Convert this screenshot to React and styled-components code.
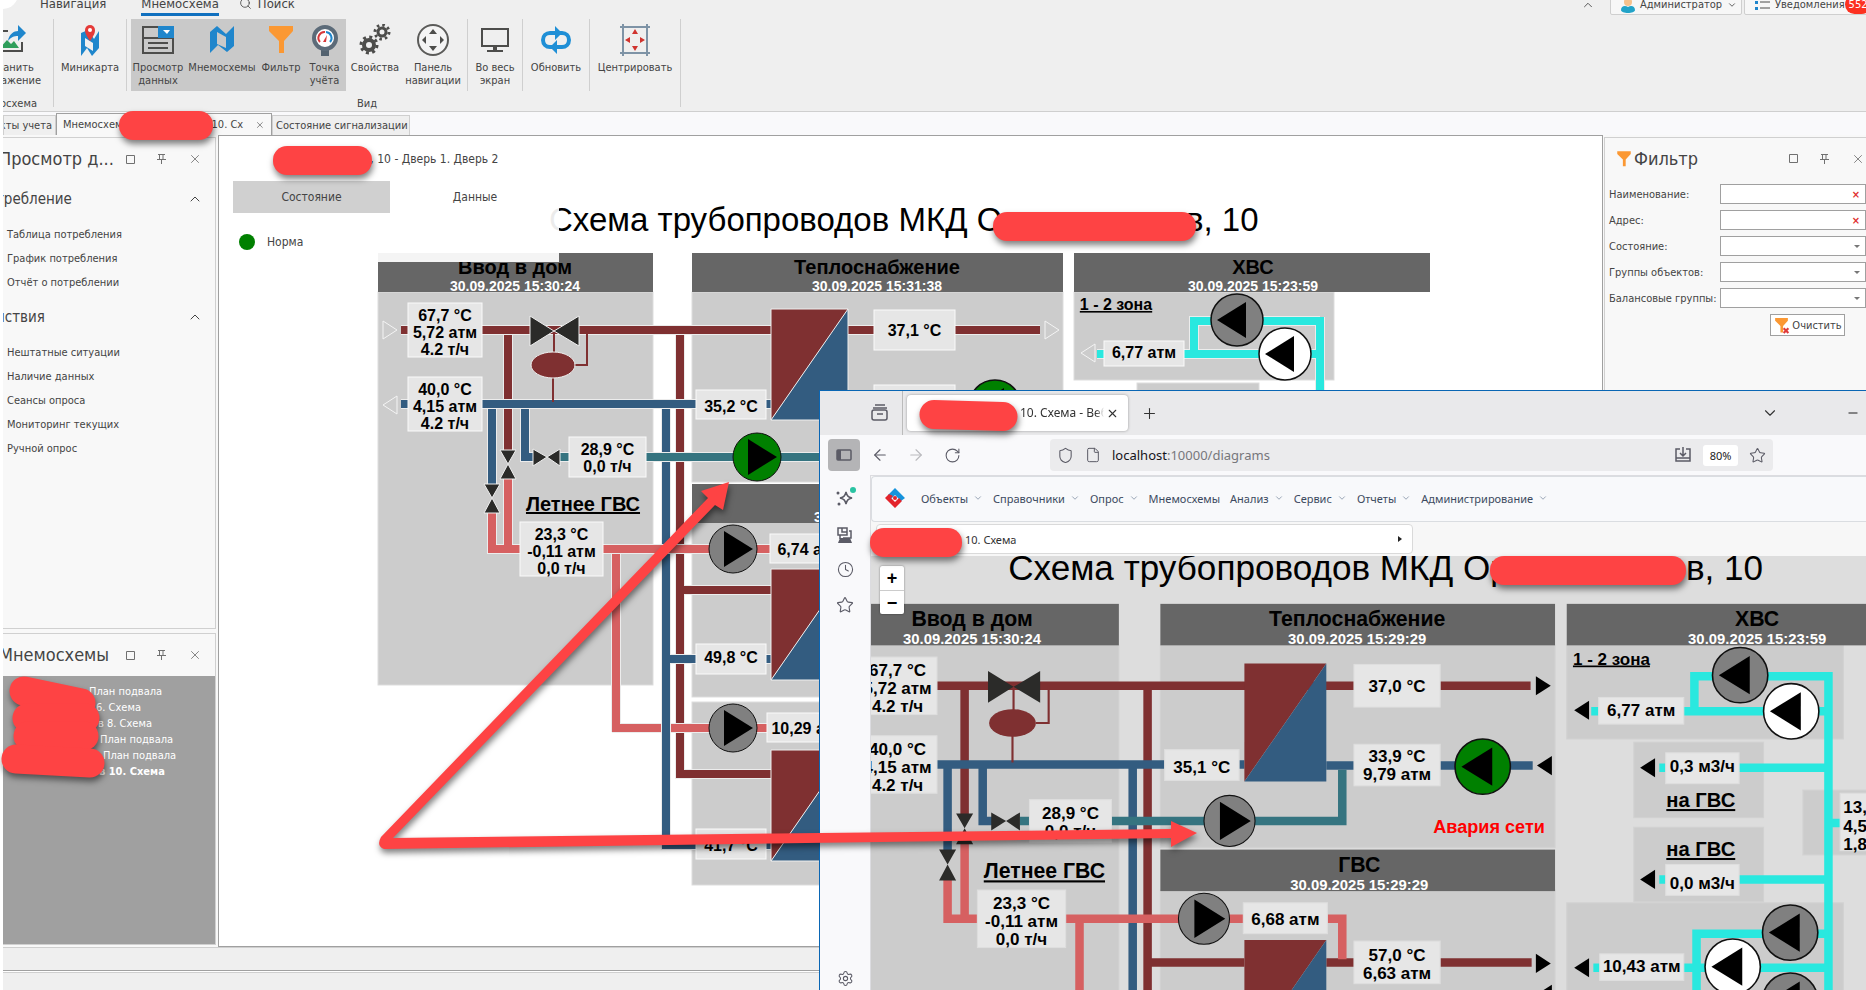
import React from "react";
import styled, { createGlobalStyle, css } from "styled-components";
import {
    ArrowLeft, ArrowRight, ChevronDown, ChevronUp, Clock, File, Minus, Plus,
    RotateCw, Search, Settings, Shield, Star, X,
} from "lucide-react";

const RED = "#7f3031";
const BLUE = "#335c80";
const TEAL = "#357480";
const PINK = "#d66061";
const CYAN = "#29e8df";

// Ribbon icons
const SaveImageIcon = () => (
    <svg width="40" height="32" viewBox="0 0 40 32" fill="none">
        <path d="M22 7H8v20h28v-9" stroke="#4d4d4b" strokeWidth="2" />
        <path d="M14 24l7-8 4 4 3-3 5 7z" fill="#2f9e5b" />
        <path d="M22 17c1-7 6-10 10-10V1l8 8-8 8v-5c-4 0-7 1-10 5z" fill="#1f86cc" />
    </svg>
);
const MinimapIcon = () => (
    <svg width="32" height="32" viewBox="0 0 32 32">
        <path d="M7 9l7-3 6 9 5-8v17l-7 8-5-8-6 8z" fill="#1f86cc" />
        <path d="M11 14v8l8 5v-8z" fill="#efefef" />
        <path d="M16 17c-4-6-5-8-5-11a5 5 0 0 1 10 0c0 3-1 5-5 11z" fill="#e53a38" />
        <circle cx="16" cy="6" r="2" fill="#fff" />
    </svg>
);
const ViewDataIcon = () => (
    <svg width="32" height="32" viewBox="0 0 32 32" fill="none">
        <path d="M1 3h30v26H1z" stroke="#4d4d4b" strokeWidth="2" />
        <path d="M1 14h30M6 19h20M6 24h20" stroke="#4d4d4b" strokeWidth="2" />
        <path d="M16 2h16v12H16z" fill="#1f86cc" />
        <path d="M21 6h7l-3 4z" fill="#fff" />
    </svg>
);
const SchemesIcon = () => (
    <svg width="32" height="32" viewBox="0 0 32 32">
        <path d="M4 8l7-6 9 8 8-8v20l-7 6-9-7-8 8z" fill="#1f86cc" />
        <path d="M11 8v12l9 4V13z" fill="#c9c9c9" />
    </svg>
);
const FunnelIcon = ({ size = 32, crossed }) => (
    <svg width={size} height={size} viewBox="0 0 32 32">
        <path d="M4 2h24v5l-9 10v12h-5V17L4 7z" fill="#fb9833" />
        {crossed && <path d="M20 21l9 9m0-9l-9 9" stroke="#df3b3b" strokeWidth="4" />}
    </svg>
);
const MeterIcon = () => (
    <svg width="32" height="32" viewBox="0 0 32 32" fill="none">
        <path d="M12 24h8v8h-8z" fill="#53626f" />
        <circle cx="16" cy="14" r="11" fill="#fff" stroke="#5c6b79" strokeWidth="4" />
        <path d="M11 18a6 6 0 0 1 5-10" stroke="#d8393b" strokeWidth="2" />
        <path d="M17 8a6 6 0 0 1 4 10" stroke="#1f86cc" strokeWidth="2" />
        <path d="M14 18l4-7-1 7z" fill="#d8393b" />
    </svg>
);
const GearsIcon = () => (
    <svg width="32" height="32" viewBox="0 0 32 32" fill="none" stroke="#4d4d4b">
        <circle cx="10" cy="21" r="5" strokeWidth="4" />
        <circle cx="10" cy="21" r="8" strokeWidth="3" strokeDasharray="3 3.28" />
        <circle cx="23" cy="8" r="4" strokeWidth="3" />
        <circle cx="23" cy="8" r="7" strokeWidth="3" strokeDasharray="2.5 3" />
    </svg>
);
const NavPanelIcon = () => (
    <svg width="32" height="32" viewBox="0 0 32 32" fill="#4d4d4b">
        <circle cx="16" cy="16" r="15" fill="#f4f4f4" stroke="#5b5b59" strokeWidth="2" />
        <path d="M16 5l4 5h-8zM16 27l4-5h-8zM5 16l4-4v8zM27 16l-4-4v8z" />
    </svg>
);
const ScreenIcon = () => (
    <svg width="32" height="32" viewBox="0 0 32 32">
        <path d="M3 5h26v17H3z" fill="none" stroke="#4d4d4b" strokeWidth="2" />
        <path d="M14 22h4v4h6v2H8v-2h6z" fill="#4d4d4b" />
    </svg>
);
const RefreshIcon = () => (
    <svg width="34" height="32" viewBox="0 0 34 32" fill="none" stroke="#1f8fd6" strokeWidth="4">
        <path d="M13 23h-2c-4 0-7-3-7-7s3-7 7-7h6" />
        <path d="M21 9h2c4 0 7 3 7 7s-3 7-7 7h-6" />
        <path d="M16 2v14l7-7zM18 30V16l-7 7z" fill="#1f8fd6" stroke="none" />
    </svg>
);
const CenterIcon = () => (
    <svg width="32" height="32" viewBox="0 0 32 32" fill="none">
        <path d="M1 3h30M1 29h30M4 0v32M28 0v32" stroke="#7e93a6" strokeWidth="2" />
        <path d="M16 5l3 5h-6zM16 27l3-5h-6zM6 16l5-3v6zM26 16l-5-3v6z" fill="#d0342f" />
    </svg>
);
const UserIcon = () => (
    <svg width="14" height="16" viewBox="0 0 14 16">
        <circle cx="7" cy="5" r="4" fill="#f5c28d" />
        <path d="M0 13c0-4 4-5 7-3 3-2 7-1 7 3 0 4-14 4-14 0z" fill="#22a3c8" />
    </svg>
);
const ListIcon = () => (
    <svg width="15" height="12" viewBox="0 0 15 12">
        <path d="M5 3h10M5 9h10" stroke="#4d4d4b" strokeWidth="1" />
        <path d="M0 2h3v3H0zM0 8h3v3H0z" fill="#1f86cc" />
    </svg>
);
const PinIcon = () => (
    <svg width="9" height="10" viewBox="0 0 9 10" fill="none" stroke="#707070">
        <path d="M1 .5h7M2.5 .5v5M6 .5v5M0 5.5h9M4.5 5.5V10" />
    </svg>
);
const SquareIcon = () => (
    <svg width="9" height="9" viewBox="0 0 9 9" fill="none" stroke="#707070">
        <path d="M.5 .5h8v8h-8z" />
    </svg>
);
const CaretIcon = () => (
    <svg width="6" height="3" viewBox="0 0 6 3"><path d="M0 0h6L3 3z" fill="#777" /></svg>
);

// Browser icons
const ArchiveIcon = () => (
    <svg width="18" height="18" viewBox="0 0 18 18" fill="none" stroke="#5b5b66" strokeWidth="1.5">
        <path d="M4 1h10M2 4h14" />
        <rect x="1" y="6" width="15" height="10" rx="2" />
        <path d="M6 10h6" />
    </svg>
);
const SidebarIcon = () => (
    <svg width="16" height="12" viewBox="0 0 16 12">
        <rect x="1" y="1" width="14" height="10" rx="1" fill="none" stroke="#5b5b66" strokeWidth="1.5" />
        <path d="M1 1h4v10H1z" fill="#5b5b66" />
    </svg>
);
const SparkIcon = () => (
    <svg width="22" height="22" viewBox="0 0 22 22" fill="none" stroke="#5b5b66" strokeWidth="1.5">
        <path d="M12 5c1 4 2 5 6 6-4 1-5 2-6 6-1-4-2-5-6-6 4-1 5-2 6-6z" />
        <circle cx="4" cy="6" r="1.5" fill="#5b5b66" stroke="none" />
        <circle cx="5" cy="17" r="1.5" fill="#5b5b66" stroke="none" />
        <circle cx="19" cy="3" r="3" fill="#2ac3a2" stroke="none" />
    </svg>
);
const DevicesIcon = () => (
    <svg width="16" height="16" viewBox="0 0 16 16" fill="none" stroke="#5b5b66" strokeWidth="1.5">
        <path d="M1 1h9v7H1zM5 1v4h5M3 8v4M12 4h2v7H6" />
        <path d="M3 11h10l2 5H1z" fill="#5b5b66" stroke="none" />
    </svg>
);
const InstallIcon = () => (
    <svg width="18" height="16" viewBox="0 0 18 16" fill="none" stroke="#5b5b66" strokeWidth="1.5">
        <path d="M6 2H2v12h14V2h-4M2 11h14M9 0v8M6 6l3 3 3-3" />
    </svg>
);
const LogoIcon = () => (
    <svg width="20" height="20" viewBox="0 0 20 20">
        <path d="M10 0l10 10-4 3-6-6-4 4-3-4z" fill="#1593dc" />
        <path d="M4 6L0 10l10 10 7-7-3-3-4 4-4-4 2-2z" fill="#e3242b" />
        <circle cx="10" cy="10" r="2" fill="#e3242b" />
    </svg>
);

// Mnemonic scheme
const PANELS = [
    [378, 292, 275, 393], [692, 292, 371, 190], [692, 522, 371, 175], [692, 702, 371, 183],
    [1074, 292, 260, 88], [1137, 383, 122, 71], [1137, 463, 122, 70], [1074, 534, 260, 100],
    [1296, 428, 200, 61],
];
const PIPES = [
    [RED, "M680 330V774H771M680 590H771M508 330V455"],
    [PINK, "M612 728H767M616 549V732"],
    [BLUE, "M666 404V845H771M666 659H771M492 404V490M525 404V457H536M848 405H1042"],
    [RED, "M401 330H1040M848 590H1041"],
    [BLUE, "M401 404H771"],
    [TEAL, "M560 457H863V409"],
    [PINK, "M508 475V549M492 510V549H849M488 549H500M849 549H863V587"],
    [CYAN, "M1097 354H1320M1194 354V321H1320M1320 317V640M1161 407H1320M1161 512H1320M1320 459H1331"],
    [CYAN, "M1196 640V563H1320M1099 595H1320M946 620H1041"],
];
const EXCHANGERS = [309, 569, 750];
const VALVES = [
    "M530 316V346L554 331 579 346V316L554 331z",
    "M533 449V466L547 457 560 466V449L547 457z",
    "M500 450H516L508 464 516 479H500L508 464z",
    "M484 484H500L492 498 500 513H484L492 498z",
];
const ARROWS = [
    [383, 330, 1], [397, 405, -1], [1045, 330, 1], [1060, 405, -1], [1045, 591, 1], [1060, 620, -1],
    [1095, 353, -1], [1157, 407, -1], [1157, 512, -1], [1095, 595, -1],
];
const VALUES = [
    { x: 408, y: 303, w: 74, h: 54, base: 321, lines: ["67,7 °C", "5,72 атм", "4.2 т/ч"] },
    { x: 408, y: 377, w: 74, h: 54, base: 395, lines: ["40,0 °C", "4,15 атм", "4.2 т/ч"] },
    { x: 569, y: 437, w: 77, h: 40, base: 455, lines: ["28,9 °C", "0,0 т/ч"] },
    { x: 520, y: 522, w: 83, h: 54, base: 540, lines: ["23,3 °C", "-0,11 атм", "0,0 т/ч"] },
    { x: 696, y: 390, w: 70, h: 29, base: 412, id: "back" },
    { x: 874, y: 310, w: 81, h: 40, base: 336, id: "out" },
    { x: 874, y: 385, w: 81, h: 39, base: 402, lines: ["33,9 °C", "9,79 атм"] },
    { x: 770, y: 534, w: 79, h: 29, base: 555, id: "pressure" },
    { x: 874, y: 570, w: 81, h: 40, base: 589, lines: ["57,0 °C", "6,63 атм"] },
    { x: 767, y: 713, w: 82, h: 29, base: 734, lines: ["10,29 атм"] },
    { x: 696, y: 644, w: 70, h: 30, base: 663, lines: ["49,8 °C"] },
    { x: 696, y: 829, w: 70, h: 30, base: 851, lines: ["41,7 °C"] },
    { x: 1104, y: 341, w: 80, h: 25, base: 358, lines: ["6,77 атм"] },
    { x: 1167, y: 393, w: 69, h: 29, base: 411, lines: ["0,3 м3/ч"] },
    { x: 1167, y: 498, w: 69, h: 29, base: 521, lines: ["0,0 м3/ч"] },
    { x: 1105, y: 582, w: 79, h: 25, base: 599, lines: ["10,43 атм"] },
    { x: 1331, y: 431, w: 80, h: 54, tx: 1345, base: 450, lines: ["13,", "4,5", "1,8"] },
];

const Pump = ({ x, y, r = 24, fill = "#808080", left }) => {
    const d = left ? -1 : 1;
    return (
        <g>
            <circle cx={x} cy={y} r={r} fill={fill} stroke="#111" strokeWidth={r > 24 ? 1.5 : 1} />
            <path d={`M${x - 9 * d} ${y - 18}V${y + 18}L${x + 20 * d} ${y}z`} fill="#000" />
        </g>
    );
};

const Value = ({ x, y, w, h, tx, base, lines, outlined }) => (
    <g>
        <rect x={x} y={y} width={w} height={h} fill="#e6e6e6" stroke={outlined ? "#fafafa" : "#dedede"} />
        {lines.map((line, i) => (
            <ValueText key={line} x={tx || x + w / 2} y={base + i * 17}>{line}</ValueText>
        ))}
    </g>
);

const Heading = ({ x, y, w, tx, title, date }) => (
    <g>
        <rect x={x} y={y} width={w} height="39" fill="#666" />
        <HeadingText x={tx} y={y + 21}>{title}</HeadingText>
        <DateText x={tx} y={y + 38}>{date}</DateText>
    </g>
);

const Scheme = ({ view, width, height, data, outlined }) => (
    <SchemeSvg viewBox={view} width={width} height={height} preserveAspectRatio="xMinYMin">
        <TitleText x="549" y="231">Схема трубопроводов МКД Ор</TitleText>
        <TitleText x="1186" y="231">в, 10</TitleText>
        {PANELS.map(([x, y, w, h]) => (
            <rect key={`${x}-${y}`} x={x} y={y} width={w} height={h} fill="#ccc" stroke={outlined ? "#ddd" : "#d2d2d2"} />
        ))}
        <Heading x={378} y={253} w={275} tx={515} title="Ввод в дом" date="30.09.2025 15:30:24" />
        <Heading x={692} y={253} w={371} tx={877} title="Теплоснабжение" date={data.heatDate} />
        <Heading x={692} y={484} w={371} tx={879} title="ГВС" date={data.heatDate} />
        <Heading x={1074} y={253} w={356} tx={1253} title="ХВС" date="30.09.2025 15:23:59" />
        {PIPES.map(([color, d]) => (
            <g key={d} fill="none">
                {outlined && <path d={d} stroke="#ececec" strokeWidth="10" />}
                <path d={d} stroke={color} strokeWidth="8" />
            </g>
        ))}
        <path d="M554 331V353M575 365H587V330M553 377V402" fill="none" stroke={RED} strokeWidth="2" />
        <ellipse cx="553" cy="365" rx="22" ry="13" fill={RED} stroke={outlined ? "#eee" : "none"} />
        {VALVES.map((d) => (
            <path key={d} d={d} fill="#2b2b29" stroke={outlined ? "#eee" : "none"} />
        ))}
        {EXCHANGERS.map((y) => (
            <g key={y}>
                <path d={`M771 ${y}H848L771 ${y + 111}z`} fill={RED} />
                <path d={`M848 ${y}V${y + 111}H771z`} fill={BLUE} />
                {outlined && <path d={`M771 ${y}H848V${y + 111}H771zM848 ${y}L771 ${y + 111}`} fill="none" stroke="#eee" />}
            </g>
        ))}
        {ARROWS.map(([x, y, d]) => (
            <path
                key={`${x}-${y}`}
                d={`M${x} ${y - 9}V${y + 9}L${x + 14 * d} ${y}z`}
                fill={outlined ? "none" : "#000"}
                stroke={outlined ? "#f4f4f4" : "none"}
            />
        ))}
        <Pump x={757} y={457} fill={data.pump} />
        <Pump x={733} y={549} />
        <Pump x={733} y={728} />
        <Pump x={995} y={406} r={26} fill="#008000" left />
        <Pump x={1237} y={320} r={26} left />
        <Pump x={1285} y={354} r={26} fill="#fff" left />
        <Pump x={1284} y={562} r={26} left />
        <Pump x={1230} y={594} r={26} fill="#fff" left />
        <Pump x={1284} y={626} r={26} left />
        {VALUES.map((v) => (
            <Value key={v.x + "-" + v.y} {...v} outlined={outlined} lines={v.lines || data[v.id]} />
        ))}
        <LabelText x="583" y="511" $size={20}>Летнее ГВС</LabelText>
        <LabelText x="1200" y="444" $size={19}>на ГВС</LabelText>
        <LabelText x="1200" y="490" $size={19}>на ГВС</LabelText>
        <LabelText x="1116" y="310" $size={16}>1 - 2 зона</LabelText>
        {data.alarm && <AlarmText x="1001" y="468">{data.alarm}</AlarmText>}
    </SchemeSvg>
);

const desktopData = {
    heatDate: "30.09.2025 15:31:38", pump: "#008000", back: ["35,2 °C"], out: ["37,1 °C"], pressure: ["6,74 атм"],
};
const webData = {
    heatDate: "30.09.2025 15:29:29", pump: "#808080", back: ["35,1 °C"], out: ["37,0 °C"], pressure: ["6,68 атм"],
    alarm: "Авария сети",
};

const ribbonGroups = [
    [{ w: 72, icon: <MinimapIcon />, label: "Миникарта" }],
    [
        { w: 54, icon: <ViewDataIcon />, label: "Просмотр данных", on: true },
        { w: 74, icon: <SchemesIcon />, label: "Мнемосхемы", on: true },
        { w: 44, icon: <FunnelIcon />, label: "Фильтр", on: true },
        { w: 43, icon: <MeterIcon />, label: "Точка учёта", on: true },
        { w: 58, icon: <GearsIcon />, label: "Свойства" },
        { w: 58, icon: <NavPanelIcon />, label: "Панель навигации" },
    ],
    [{ w: 54, icon: <ScreenIcon />, label: "Во весь экран" }],
    [{ w: 66, icon: <RefreshIcon />, label: "Обновить" }],
    [{ w: 90, icon: <CenterIcon />, label: "Центрировать" }],
];

const menu = ["Объекты", "Справочники", "Опрос", "Мнемосхемы", "Анализ", "Сервис", "Отчеты", "Администрирование"];

const tree = [
    { indent: 86, text: "План подвала" },
    { indent: 93, text: "6. Схема" },
    { indent: 95, text: "в 8. Схема" },
    { indent: 97, text: "План подвала" },
    { indent: 100, text: "План подвала" },
    { indent: 96, text: "в 10. Схема", bold: true },
];

const PanelTools = () => (
    <Tools>
        <PlainButton aria-label="Развернуть"><SquareIcon /></PlainButton>
        <PlainButton aria-label="Закрепить"><PinIcon /></PlainButton>
        <PlainButton aria-label="Закрыть"><X size={14} strokeWidth={1.5} /></PlainButton>
    </Tools>
);

const NavSection = ({ title, items }) => (
    <Section>
        <SectionTitle><h3>{title}</h3><ChevronUp size={16} strokeWidth={1.5} /></SectionTitle>
        {items.map((item) => <NavLink href="#" key={item}>{item}</NavLink>)}
    </Section>
);

const Browser = () => (
    <Window>
        <TitleBar>
            <ArchiveSlot><ArchiveIcon /></ArchiveSlot>
            <BrowserTab>
                <span>10. Схема - Веб</span>
                <PlainButton aria-label="Закрыть вкладку"><X size={13} strokeWidth={2} /></PlainButton>
            </BrowserTab>
            <PlainButton aria-label="Новая вкладка"><Plus size={17} strokeWidth={1.5} /></PlainButton>
            <WindowTools>
                <ChevronDown size={18} strokeWidth={1.5} />
                <Minus size={14} color="#000" strokeWidth={1.5} />
            </WindowTools>
        </TitleBar>
        <NavBar>
            <SidebarButton aria-label="Боковая панель"><SidebarIcon /></SidebarButton>
            <NavButton aria-label="Назад"><ArrowLeft size={18} strokeWidth={1.5} /></NavButton>
            <NavButton aria-label="Вперёд" disabled><ArrowRight size={18} strokeWidth={1.5} /></NavButton>
            <NavButton aria-label="Обновить"><RotateCw size={17} strokeWidth={1.5} /></NavButton>
            <UrlBar>
                <Shield size={17} strokeWidth={1.5} />
                <File size={16} strokeWidth={1.5} />
                <Url><b>localhost</b>:10000/diagrams</Url>
                <InstallIcon />
                <Zoom>80%</Zoom>
                <Star size={17} strokeWidth={1.5} />
            </UrlBar>
        </NavBar>
        <BrowserBody>
            <SideStrip>
                <SparkIcon />
                <DevicesIcon />
                <Clock size={17} strokeWidth={1.5} />
                <Star size={18} strokeWidth={1.5} />
                <Settings size={17} strokeWidth={1.5} />
            </SideStrip>
            <Site>
                <SiteMenu>
                    <LogoIcon />
                    {menu.map((item) => (
                        <MenuLink href="#" key={item}>
                            {item}
                            {item !== "Мнемосхемы" && <ChevronDown size={10} color="#8795a8" />}
                        </MenuLink>
                    ))}
                </SiteMenu>
                <SitePath>
                    <PathButton><span>10. Схема</span><i /></PathButton>
                </SitePath>
                <WebCanvas>
                    <Scheme view="420 208 940 410" width="1000" height="500" data={webData} />
                    <ZoomControl>
                        <button aria-label="Приблизить">+</button>
                        <button aria-label="Отдалить">−</button>
                    </ZoomControl>
                </WebCanvas>
            </Site>
        </BrowserBody>
    </Window>
);

// Red marks drawn by hand over the windows
const Marks = () => (
    <MarksSvg>
        <circle cx="3" cy="-6" r="15" fill="#fff" />
        <g fill="#fe4344">
            <g>
                <rect x="119" y="111" width="94" height="29" rx="14" />
                <rect x="273" y="146" width="99" height="29" rx="14" />
                <rect x="993" y="212" width="203" height="29" rx="14" />
                <path d="M934 400l69 2a14 14 0 0 1 0 29l-69-2a14 14 0 0 1 0-29z" />
                <rect x="870" y="528" width="92" height="29" rx="14" />
                <rect x="1490" y="556" width="196" height="29" rx="14" />
            </g>
            <g stroke="#fe4344" strokeWidth="29" strokeLinecap="round">
                <path d="M24 691L81 703" />
                <path d="M27 718H85" />
                <path d="M28 736H84" />
                <path d="M16 759L90 763" />
            </g>
            <path d="M381 837L708 498 701 491 729 482 723 510 715 505 393 838 1171 829V821L1197 833 1171 847V838L384 849Q376 846 381 837z" />
        </g>
    </MarksSvg>
);

const App = () => {
    return (
        <Page>
            <GlobalStyle />
            <Ribbon>
                <RibbonTabs>
                    <RibbonTab>Навигация</RibbonTab>
                    <RibbonTab $active>Мнемосхема</RibbonTab>
                    <RibbonTab><Search size={13} strokeWidth={1.5} />Поиск</RibbonTab>
                    <Account>
                        <ChevronUp size={14} strokeWidth={1.5} />
                        <AccountButton $w={132}><UserIcon />Администратор<ChevronDown size={10} /></AccountButton>
                        <AccountButton $w={141}><ListIcon />Уведомления<Badge>552</Badge></AccountButton>
                    </Account>
                </RibbonTabs>
                <RibbonBody>
                    <RibbonGroup $cut>
                        <RibbonButtons>
                            <RibbonButton $w={80}><SaveImageIcon />Сохранить изображение</RibbonButton>
                        </RibbonButtons>
                        <Caption>Мнемосхема</Caption>
                    </RibbonGroup>
                    <RibbonGroup>
                        <RibbonButtons>
                            {ribbonGroups.map((group, i) => (
                                <ButtonSet key={i} $padded={i === 1}>
                                    {group.map((b) => (
                                        <RibbonButton key={b.label} $w={b.w} $on={b.on}>{b.icon}{b.label}</RibbonButton>
                                    ))}
                                </ButtonSet>
                            ))}
                        </RibbonButtons>
                        <Caption>Вид</Caption>
                    </RibbonGroup>
                </RibbonBody>
            </Ribbon>
            <DocTabs>
                <DocTab $w={53} $cut><span>Объекты учета</span></DocTab>
                <DocTab $w={216} $active>
                    <span>Мнемосхема</span><em>10. Сх</em><X size={10} strokeWidth={1.5} />
                </DocTab>
                <DocTab $w={138}><span>Состояние сигнализации</span></DocTab>
            </DocTabs>
            <Workspace>
                <LeftColumn>
                    <Panel $grow>
                        <PanelHeader $cut><h2>Просмотр д...</h2><PanelTools /></PanelHeader>
                        <NavSection
                            title="требление"
                            items={["Таблица потребления", "График потребления", "Отчёт о потреблении"]}
                        />
                        <NavSection
                            title="йствия"
                            items={["Нештатные ситуации", "Наличие данных", "Сеансы опроса", "Мониторинг текущих", "Ручной опрос"]}
                        />
                    </Panel>
                    <Panel $h={312}>
                        <PanelHeader $cut><h2>Мнемосхемы</h2><PanelTools /></PanelHeader>
                        <Tree>
                            {tree.map((row) => (
                                <TreeRow key={row.indent} $indent={row.indent} $bold={row.bold}>{row.text}</TreeRow>
                            ))}
                        </Tree>
                    </Panel>
                </LeftColumn>
                <Document>
                    <Scheme view="219 136 1384 810" width="1384" height="810" data={desktopData} outlined />
                    <DocHeader>
                        <Address>в, 10 - Дверь 1. Дверь 2</Address>
                        <Switcher>
                            <SwitchButton $active>Состояние</SwitchButton>
                            <SwitchButton>Данные</SwitchButton>
                        </Switcher>
                        <State>Норма</State>
                        <HeaderEdge />
                    </DocHeader>
                </Document>
                <FilterPanel>
                    <PanelHeader><FunnelIcon size={18} /><h2>Фильтр</h2><PanelTools /></PanelHeader>
                    <Field>
                        <label htmlFor="name">Наименование:</label>
                        <Box><input id="name" /><Cross>×</Cross></Box>
                    </Field>
                    <Field>
                        <label htmlFor="addr">Адрес:</label>
                        <Box><input id="addr" /><Cross>×</Cross></Box>
                    </Field>
                    <Field>
                        <label htmlFor="state">Состояние:</label>
                        <Box><select id="state" /><CaretIcon /></Box>
                    </Field>
                    <Field>
                        <label htmlFor="groups">Группы объектов:</label>
                        <Box><select id="groups" /><CaretIcon /></Box>
                    </Field>
                    <Field>
                        <label htmlFor="balance">Балансовые группы:</label>
                        <Box><select id="balance" /><CaretIcon /></Box>
                    </Field>
                    <ClearButton><FunnelIcon size={17} crossed />Очистить</ClearButton>
                </FilterPanel>
            </Workspace>
            <StatusBar $h={23} />
            <StatusBar $h={20} $double />
            <Browser />
            <Marks />
        </Page>
    );
};

const GlobalStyle = createGlobalStyle`
    * {
        box-sizing: border-box;
    }
    body {
        margin: 0;
        overflow: hidden;
        background: #fff;
    }
    button, input, select {
        margin: 0;
        padding: 0;
        border: 0;
        background: none;
        color: inherit;
        font: inherit;
    }
    h2, h3 {
        margin: 0;
        font-weight: normal;
    }
    a {
        color: inherit;
        text-decoration: none;
    }
`;

const Page = styled.div`
    position: relative;
    display: flex;
    flex-direction: column;
    height: 100vh;
    padding-left: 3px;
    overflow: hidden;
    background: #fff;
    color: #444;
    font: 11px/13px "DejaVu Sans Condensed", "DejaVu Sans", sans-serif;
`;
const PlainButton = styled.button`
    display: flex;
    align-items: center;
    justify-content: center;
`;
const Ribbon = styled.header`
    height: 112px;
    background: #efefef;
    border-bottom: 1px solid #cfcfcf;
`;
const RibbonTabs = styled.div`
    display: flex;
    height: 22px;
    margin-top: -6px;
    padding-left: 37px;
`;
const RibbonTab = styled.button`
    display: flex;
    align-items: center;
    gap: 6px;
    height: 22px;
    margin-right: ${({ $active }) => ($active ? "20px" : "35px")};
    border-bottom: 3px solid ${({ $active }) => ($active ? "#1070bf" : "transparent")};
    font-size: 13px;
`;
const Account = styled.div`
    display: flex;
    flex: 1;
    justify-content: flex-end;
    gap: 2px;
    margin-right: -19px;
    svg {
        flex: none;
        align-self: center;
    }
    > svg {
        margin-right: 13px;
    }
`;
const AccountButton = styled.button`
    display: flex;
    align-items: center;
    gap: 5px;
    width: ${({ $w }) => $w}px;
    height: 21px;
    padding: 0 10px;
    border: 1px solid #cfcfcf;
    border-radius: 2px;
    background: #f7f7f7;
`;
const Badge = styled.span`
    margin-left: -5px;
    padding: 3px 4px;
    border-radius: 10px;
    background: #fc3120;
    color: #fff;
`;
const RibbonBody = styled.div`
    display: flex;
    padding-top: 3px;
`;
const Caption = styled.div`
    padding-top: 6px;
`;
const RibbonGroup = styled.div`
    display: flex;
    flex-direction: column;
    align-items: center;
    height: 88px;
    border-right: 1px solid #cfcfcf;
    ${({ $cut }) => $cut && css`
        width: 51px;
        padding-right: 7px;
        overflow: hidden;
        align-items: flex-end;
        ${Caption} {
            margin-right: 9px;
        }
    `}
`;
const RibbonButtons = styled.div`
    display: flex;
`;
const ButtonSet = styled.div`
    display: flex;
    padding: ${({ $padded }) => ($padded ? "0 5px 0 4px" : "0")};
    & + & {
        border-left: 1px solid #cfcfcf;
    }
`;
const RibbonButton = styled.button`
    display: flex;
    flex: none;
    flex-direction: column;
    align-items: center;
    gap: 5px;
    width: ${({ $w }) => $w}px;
    height: 72px;
    padding-top: 5px;
    background: ${({ $on }) => ($on ? "#c9c9c9" : "none")};
    text-align: center;
`;
const DocTabs = styled.nav`
    display: flex;
    align-items: flex-end;
    flex: none;
    height: 23px;
    background: #f9f9fb;
`;
const DocTab = styled.button`
    display: flex;
    align-items: center;
    flex: none;
    width: ${({ $w }) => $w}px;
    height: ${({ $active }) => ($active ? 22 : 20)}px;
    padding: 0 ${({ $active }) => ($active ? 6 : 3)}px;
    overflow: hidden;
    justify-content: ${({ $cut }) => ($cut ? "flex-end" : "flex-start")};
    border: 1px solid ${({ $active }) => ($active ? "#a0a0a0" : "#cfcfcf")};
    border-bottom: 0;
    background: ${({ $active }) => ($active ? "#f8f8f8" : "#efefef")};
    white-space: nowrap;
    em {
        margin: 0 12px 0 83px;
        font-style: normal;
    }
`;
const Workspace = styled.main`
    display: flex;
    flex: 1;
    min-height: 0;
    background: #f8f8f8;
`;
const LeftColumn = styled.div`
    display: flex;
    flex-direction: column;
    flex: none;
    gap: 4px;
    width: 213px;
    padding: 2px 0;
    margin-right: 2px;
`;
const Panel = styled.section`
    flex: ${({ $grow }) => ($grow ? 1 : "none")};
    height: ${({ $h }) => ($h ? `${$h}px` : "auto")};
    display: flex;
    flex-direction: column;
    border: 1px solid #d0d0d0;
    border-left: 0;
    background: #f8f8f8;
    overflow: hidden;
`;
const Tools = styled.div`
    display: flex;
    gap: 22px;
    margin-left: auto;
    color: #777;
`;
const PanelHeader = styled.div`
    display: flex;
    align-items: center;
    flex: none;
    height: 42px;
    padding-right: 13px;
    h2 {
        margin-left: ${({ $cut }) => ($cut ? "-4px" : "1px")};
        font-size: 18px;
        line-height: 24px;
        white-space: nowrap;
    }
`;
const Section = styled.div`
    padding-bottom: 3px;
`;
const SectionTitle = styled.div`
    display: flex;
    align-items: center;
    justify-content: space-between;
    height: 38px;
    margin-bottom: 5px;
    padding-right: 12px;
    h3 {
        margin-left: -7px;
        font-size: 15px;
        line-height: 20px;
    }
`;
const NavLink = styled.a`
    display: block;
    padding-left: 4px;
    line-height: 24px;
`;
const Tree = styled.ul`
    flex: 1;
    margin: 0;
    padding: 8px 0;
    background: #a0a0a0;
    color: #fff;
    list-style: none;
`;
const TreeRow = styled.li`
    padding-left: ${({ $indent }) => $indent}px;
    font-weight: ${({ $bold }) => ($bold ? "bold" : "normal")};
    line-height: 16px;
`;
const Document = styled.section`
    position: relative;
    flex: 1;
    min-width: 0;
    overflow: hidden;
    border: 1px solid #a0a0a0;
    background: #fff;
`;
const DocHeader = styled.div`
    position: absolute;
    top: 0;
    left: 0;
    display: flex;
    flex-direction: column;
    width: 340px;
    height: 126px;
    padding: 15px 0 0 14px;
    background: linear-gradient(to right, transparent 330px, rgba(255, 255, 255, 0.92) 330px) 0 0 / 340px 117px no-repeat;
    font-size: 12px;
`;
const HeaderEdge = styled.div`
    flex: none;
    width: 181px;
    height: 9px;
    margin: auto 0 0 145px;
    background: #f4f4f4;
`;
const Address = styled.div`
    padding-left: 131px;
    line-height: 16px;
    white-space: nowrap;
`;
const Switcher = styled.div`
    display: flex;
    margin-top: 14px;
`;
const SwitchButton = styled.button`
    flex: none;
    width: ${({ $active }) => ($active ? 157 : 170)}px;
    height: 32px;
    background: ${({ $active }) => ($active ? "#d0d0d0" : "none")};
`;
const State = styled.div`
    display: flex;
    align-items: center;
    gap: 12px;
    height: 20px;
    margin: 19px 0 0 6px;
    &::before {
        content: "";
        width: 16px;
        height: 16px;
        border-radius: 50%;
        background: #008000;
    }
`;
const FilterPanel = styled.aside`
    flex: none;
    width: 262px;
    margin: 2px 0 0 1px;
    padding-left: 4px;
    border: 1px solid #d0d0d0;
    border-right: 0;
    > ${PanelHeader} {
        height: 46px;
        padding: 0 0 5px 6px;
    }
    ${Tools} {
        margin-right: 1px;
    }
`;
const Field = styled.div`
    display: flex;
    align-items: center;
    height: 20px;
    margin-bottom: 6px;
    label {
        flex: none;
        width: 111px;
    }
`;
const Box = styled.div`
    display: flex;
    align-items: center;
    flex: 1;
    height: 20px;
    padding-right: 5px;
    border: 1px solid #a0a0a0;
    background: #fff;
    input, select {
        flex: 1;
        min-width: 0;
        appearance: none;
        outline: 0;
    }
`;
const Cross = styled.span`
    color: #df2f2f;
    font-weight: bold;
`;
const ClearButton = styled.button`
    display: flex;
    align-items: center;
    justify-content: center;
    gap: 2px;
    width: 75px;
    height: 22px;
    margin-left: 161px;
    border: 1px solid #a0a0a0;
    background: #fff;
`;
const StatusBar = styled.footer`
    flex: none;
    height: ${({ $h }) => $h}px;
    background: #efefef;
    border-top: 1px solid ${({ $double }) => ($double ? "#a0a0a0" : "#cfcfcf")};
    box-shadow: ${({ $double }) => ($double ? "inset 0 1px 0 #fff, inset 0 2px 0 #cfcfcf" : "none")};
`;

const SchemeSvg = styled.svg`
    display: block;
    flex: none;
    font-family: "Liberation Sans", Arial, sans-serif;
`;
const SvgText = styled.text`
    font-weight: bold;
    text-anchor: middle;
`;
const ValueText = styled(SvgText)`
    font-size: 16px;
`;
const HeadingText = styled(SvgText)`
    font-size: 20px;
`;
const DateText = styled(SvgText)`
    font-size: 14px;
    fill: #fff;
`;
const LabelText = styled(SvgText)`
    font-size: ${({ $size }) => $size}px;
    text-decoration: underline;
`;
const AlarmText = styled(SvgText)`
    font-size: 17px;
    fill: #f00;
`;
const TitleText = styled.text`
    font-size: 33px;
`;

const Window = styled.section`
    position: absolute;
    top: 390px;
    right: 0;
    bottom: 0;
    left: 819px;
    display: flex;
    flex-direction: column;
    border: 1px solid #0a66b4;
    border-right: 0;
    border-bottom: 0;
    background: #f9f9fb;
    color: #333;
    font-family: "Noto Sans", sans-serif;
`;
const TitleBar = styled.div`
    display: flex;
    align-items: center;
    flex: none;
    height: 44px;
    background: #e9e9eb;
`;
const ArchiveSlot = styled.div`
    display: flex;
    align-items: center;
    height: 44px;
    width: 83px;
    padding-left: 51px;
    border-right: 1px solid #bbb;
`;
const BrowserTab = styled.div`
    display: flex;
    align-items: center;
    justify-content: flex-end;
    gap: 2px;
    width: 221px;
    height: 36px;
    margin: 0 13px 0 4px;
    padding-right: 9px;
    border-radius: 4px;
    background: #fff;
    box-shadow: 0 0 3px rgba(0, 0, 0, 0.35);
    font-size: 12px;
    span {
        width: 84px;
        overflow: hidden;
        line-height: 18px;
        white-space: nowrap;
        mask-image: linear-gradient(to right, #000 76px, transparent 84px);
    }
`;
const WindowTools = styled.div`
    display: flex;
    align-items: center;
    gap: 67px;
    margin-left: auto;
    padding-right: 6px;
`;
const NavBar = styled.div`
    display: flex;
    align-items: center;
    flex: none;
    height: 40px;
    padding-left: 8px;
`;
const SidebarButton = styled(PlainButton)`
    width: 32px;
    height: 32px;
    margin-right: 2px;
    border-radius: 4px;
    background: #b4b4b6;
`;
const NavButton = styled(PlainButton)`
    width: 36px;
    height: 32px;
    color: #5b5b66;
    &:disabled {
        color: #b9b9bd;
    }
`;
const UrlBar = styled.div`
    display: flex;
    align-items: center;
    flex: 1;
    gap: 11px;
    height: 32px;
    margin: 0 93px 0 80px;
    padding: 0 7px;
    border-radius: 4px;
    background: #ebebed;
    color: #5b5b66;
`;
const Url = styled.div`
    flex: 1;
    color: #77777c;
    font-size: 13px;
    line-height: 18px;
    b {
        color: #15141a;
        font-weight: normal;
    }
`;
const Zoom = styled.button`
    width: 35px;
    height: 21px;
    border-radius: 3px;
    background: #fff;
    color: #222;
`;
const BrowserBody = styled.div`
    display: flex;
    flex: 1;
    min-height: 0;
`;
const SideStrip = styled.div`
    display: flex;
    flex-direction: column;
    align-items: center;
    flex: none;
    gap: 18px;
    width: 50px;
    padding: 12px 0 3px;
    color: #5b5b66;
    svg:last-child {
        margin-top: auto;
    }
`;
const Site = styled.div`
    display: flex;
    flex-direction: column;
    flex: 1;
    min-width: 0;
    border-top: 1px solid #dcdce0;
    border-left: 1px solid #dcdce0;
    background: #f7f7f7;
`;
const SiteMenu = styled.nav`
    display: flex;
    align-items: center;
    flex: none;
    height: 46px;
    padding: 0 0 2px 13px;
    border: 1px solid #dadde1;
    border-right: 0;
    border-radius: 4px 0 0 4px;
    background: #f8f9fb;
    > svg {
        margin-right: 16px;
    }
`;
const MenuLink = styled.a`
    display: flex;
    align-items: center;
    gap: 5px;
    margin-right: 10px;
    color: #3c4a60;
`;
const SitePath = styled.div`
    flex: none;
    height: 34px;
    padding: 2px 5px;
`;
const PathButton = styled.button`
    display: flex;
    align-items: center;
    justify-content: space-between;
    width: 537px;
    height: 30px;
    padding: 0 10px 0 88px;
    border: 1px solid #dadada;
    border-radius: 4px;
    background: #fff;
    i {
        border: 3px solid transparent;
        border-left: 4px solid #222;
        border-right: 0;
    }
`;
const WebCanvas = styled.div`
    position: relative;
    flex: 1;
    min-height: 0;
    overflow: hidden;
    background: #ddd;
`;
const ZoomControl = styled.div`
    position: absolute;
    top: 10px;
    left: 9px;
    display: flex;
    flex-direction: column;
    width: 24px;
    border-radius: 2px;
    background: #fff;
    box-shadow: 0 0 2px rgba(0, 0, 0, 0.5);
    button {
        height: 24px;
        color: #000;
        font: bold 18px/22px "Liberation Sans", sans-serif;
    }
    button + button {
        border-top: 1px solid #ccc;
    }
`;
const MarksSvg = styled.svg`
    position: absolute;
    top: 0;
    left: 0;
    width: 100%;
    height: 100%;
    pointer-events: none;
    > g > * {
        filter: drop-shadow(1px 4px 3px rgba(0, 0, 0, 0.5));
    }
`;

export default App;
